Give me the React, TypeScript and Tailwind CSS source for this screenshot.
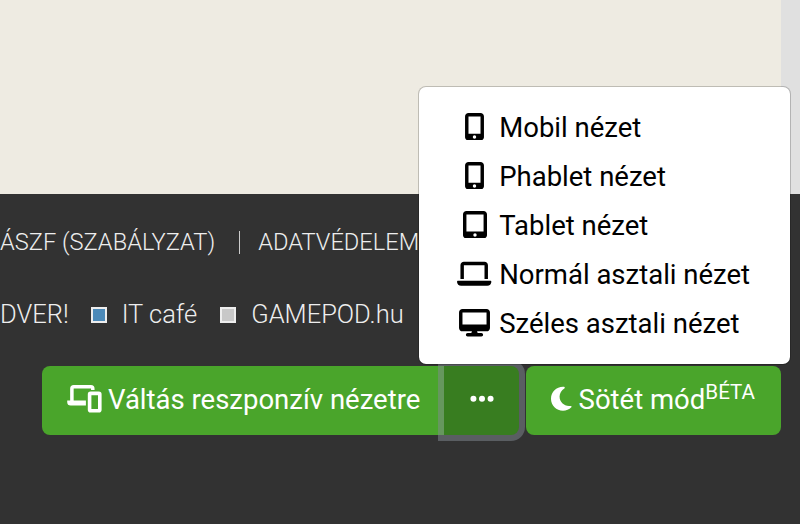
import React from 'react';
import type { IconType } from 'react-icons';
import {
  FaDesktop,
  FaEllipsis,
  FaLaptop,
  FaMobileScreenButton,
  FaMoon,
  FaTabletScreenButton,
} from 'react-icons/fa6';

interface ViewOption {
  label: string;
  icon: IconType;
  iconClass: string;
}

const viewOptions: ViewOption[] = [
  { label: 'Mobil nézet', icon: FaMobileScreenButton, iconClass: 'w-[21px]' },
  { label: 'Phablet nézet', icon: FaMobileScreenButton, iconClass: 'w-[21px]' },
  { label: 'Tablet nézet', icon: FaTabletScreenButton, iconClass: 'w-[24px]' },
  { label: 'Normál asztali nézet', icon: FaLaptop, iconClass: 'w-[34.4px]' },
  { label: 'Széles asztali nézet', icon: FaDesktop, iconClass: 'w-[31px]' },
];

const ResponsiveIcon = () => (
  <svg viewBox="0 0 35 28" className="w-[35px] h-7 shrink-0 -translate-y-px" fill="none" stroke="currentColor">
    <path d="M4.9 16V3.7a1.9 1.9 0 0 1 1.9-1.9h17.1a1.9 1.9 0 0 1 1.9 1.9v1.2" strokeWidth="3.5" />
    <path d="M.2 15.6h18.7v4.8H3.7A3.5 3.5 0 0 1 .2 16.9z" fill="currentColor" stroke="none" />
    <rect x="22.6" y="8.4" width="10.2" height="17.4" rx="1" strokeWidth="3.6" />
  </svg>
);

const ViewMenu = () => (
  <ul className="absolute left-[417.5px] top-[86px] z-10 w-[373px] h-[279px] rounded-[8px] border-[1.5px] border-black/20 bg-white bg-clip-padding pt-[16px] text-black">
    {viewOptions.map(({ label, icon: Icon, iconClass }) => (
      <li key={label} className="flex h-[49.1px] items-center pl-[38.7px] text-[27.5px] whitespace-nowrap">
        <span className="flex w-[35px] justify-center">
          <Icon className={`h-[27.5px] shrink-0 -translate-y-px ${iconClass}`} />
        </span>
        <span className="ml-[7px]">{label}</span>
      </li>
    ))}
  </ul>
);

export default function App() {
  return (
    <div className="relative flex h-[524px] w-[800px] flex-col overflow-hidden bg-[#323232] font-['Roboto',sans-serif]">
      <main className="flex h-[194px] shrink-0 bg-[#e0e0e0]">
        <div className="w-[781px] bg-[#eeebe2]" />
      </main>

      <footer className="pt-6 text-white">
        <nav className="flex h-12 items-center whitespace-nowrap text-[23.65px] font-light text-[#eeeeee]">
          <span className="pt-px">ÁSZF (SZABÁLYZAT)</span>
          <span className="ml-6 mr-[18px] h-[23px] w-px bg-[#cccccc]" />
          <span className="pt-px">ADATVÉDELEM</span>
        </nav>

        <div className="mt-6 flex h-12 items-center whitespace-nowrap text-[25.5px] font-light text-[#eeeeee]">
          <span>DVER!</span>
          <span className="ml-[22px] mr-[15px] mt-px size-4 border-2 border-[#eeeeee] bg-[#4c8ab9]" />
          <span>IT café</span>
          <span className="ml-[23px] mr-[15px] mt-px size-4 border-2 border-[#eeeeee] bg-[#c8c8c8]" />
          <span>GAMEPOD.hu</span>
        </div>

        <div className="mt-7 flex h-[69px] pl-[42px] text-[27.5px] whitespace-nowrap">
          <button className="flex w-[402px] items-center rounded-l-[8px] bg-[#4aa52b] pb-[2px] pl-[25px]">
            <ResponsiveIcon />
            <span className="ml-[6px]">Váltás reszponzív nézetre</span>
          </button>
          <button className="flex w-[75px] items-center justify-center rounded-r-[8px] bg-[#387d20] pb-[3px] shadow-[0_0_0_6px_rgba(130,138,145,0.5)]">
            <FaEllipsis className="h-[27.5px] w-[24px]" />
          </button>
          <button className="relative ml-[7px] flex w-[255px] items-center rounded-[8px] bg-[#4aa52b] pb-[2px] pl-[25px]">
            <FaMoon className="h-[27.5px] w-[20.6px] shrink-0 -translate-y-px" />
            <span className="ml-[7px]">Sötét mód</span>
            <sup className="top-[-7px] text-[20.6px] leading-none">BÉTA</sup>
          </button>
        </div>
      </footer>

      <ViewMenu />
    </div>
  );
}
